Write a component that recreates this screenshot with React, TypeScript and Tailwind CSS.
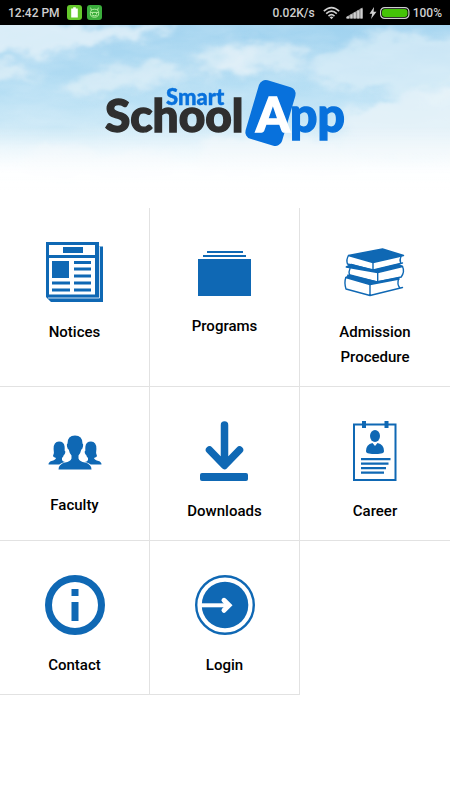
import type { ReactNode } from "react";

const BLUE = "#0f68b4";

function StatusBar() {
  return (
    <header className="flex h-[25px] items-center justify-between bg-black px-2 text-[12px] font-medium text-[#cfcfcf]">
      <div className="flex items-center gap-[5px]">
        <span className="pr-0.5">12:42 PM</span>
        <svg width="15" height="15" viewBox="0 0 15 15" aria-hidden="true">
          <rect width="15" height="15" rx="3" fill="#65c92c" />
          <path d="M4.2 3.6h2V2.3h2.6v1.3h2v9H4.2z" fill="#fff" />
        </svg>
        <svg width="15" height="15" viewBox="0 0 15 15" aria-hidden="true">
          <rect width="15" height="15" rx="3" fill="#3aad3c" />
          <g fill="none" stroke="#b4eda4" strokeWidth="1">
            <ellipse cx="7.5" cy="8.2" rx="4.2" ry="4" />
            <path d="M4.4 5 3.6 2.6M10.6 5l.8-2.4M3.5 7.4h8M5 10q2.5 1.6 5 0M5.5 8v1M9.5 8v1" />
          </g>
        </svg>
      </div>
      <div className="flex items-center">
        <span className="pr-2">0.02K/s</span>
        <svg width="17" height="14" viewBox="0 0 17 14" fill="none" stroke="#cfcfcf" strokeWidth="1.6" aria-hidden="true">
          <path d="M.8 5.2Q8.5-2 16.2 5.2M3.2 7.7q5.3-5 10.6 0M5.5 10.1q3-2.9 6 0" />
          <path d="M6.6 11.2 8.5 13.3l1.9-2.1q-1.9-1.4-3.8 0z" fill="#cfcfcf" stroke="none" />
        </svg>
        <svg className="ml-1.5" width="17" height="12" viewBox="0 0 17 12" aria-hidden="true">
          <path d="M0 11.5V10l16.5-9.5v11z" fill="#8f8f8f" />
          <path d="M1 11.5V9.4h2v2.1zM4.4 11.5v-4h2v4zM7.8 11.5v-6h2v6zM11.2 11.5v-8h2v8zM14.6 11.5v-10h2v10z" fill="#cfcfcf" />
        </svg>
        <svg className="ml-1.5" width="8" height="12" viewBox="0 0 8 12" aria-hidden="true">
          <path d="M5 0 .5 6.8h2.7L2 12l5.5-7.2H4.6z" fill="#cfcfcf" />
        </svg>
        <svg className="ml-[3px]" width="30" height="12" viewBox="0 0 30 12" aria-hidden="true">
          <rect x=".6" y=".6" width="28.3" height="10.8" rx="4" fill="none" stroke="#cfcfcf" strokeWidth="1.2" />
          <rect x="2" y="2" width="25.5" height="8" rx="3" fill="#45c408" />
        </svg>
        <span className="pl-[3px]">100%</span>
      </div>
    </header>
  );
}

function Sky() {
  return (
    <svg className="absolute inset-0 h-full w-full" viewBox="0 0 450 183" preserveAspectRatio="none" aria-hidden="true">
      <defs>
        <linearGradient id="sky" x1="0" y1="0" x2="0" y2="1">
          <stop offset="0" stopColor="#a0d2ef" />
          <stop offset="0.4" stopColor="#b7dff4" />
          <stop offset="0.6" stopColor="#cfeaf7" />
          <stop offset="0.8" stopColor="#f0f9fd" />
          <stop offset="1" stopColor="#fff" />
        </linearGradient>
        <linearGradient id="fade" x1="0" y1="0" x2="0" y2="1">
          <stop offset="0.55" stopColor="#fff" stopOpacity="0" />
          <stop offset="0.8" stopColor="#fff" stopOpacity="0.85" />
          <stop offset="0.93" stopColor="#fff" />
        </linearGradient>
        <filter id="wisps" x="0" y="0" width="1" height="1">
          <feTurbulence type="fractalNoise" baseFrequency="0.016 0.05" numOctaves="5" seed="7" />
          <feColorMatrix values="0 0 0 0 1  0 0 0 0 1  0 0 0 0 1  1.4 0 0 0 -0.4" />
        </filter>
        <filter id="puff" x="-0.2" y="-0.2" width="1.4" height="1.4">
          <feTurbulence type="fractalNoise" baseFrequency="0.04 0.07" numOctaves="5" seed="4" result="n" />
          <feGaussianBlur in="SourceGraphic" stdDeviation="6 3" result="soft" />
          <feDisplacementMap in="soft" in2="n" scale="26" xChannelSelector="R" yChannelSelector="G" />
          <feGaussianBlur stdDeviation="0.8" />
        </filter>
      </defs>
      <rect width="450" height="183" fill="url(#sky)" />
      <rect width="450" height="183" filter="url(#wisps)" opacity="0.25" />
      <g fill="#eaf4f9" filter="url(#puff)">
        <path d="M-20-8Q60-8 110 4q50-6 75-6-40 14-70 18-60 16-135 12z" opacity="0.75" />
        <path d="M-20 38q40 0 60 14-30 4-60 0z" opacity="0.6" />
        <path d="M70 60q25-20 80-22 36 4 46 12-30 10-66 12-25 8-60 8z" opacity="0.6" />
        <path d="M190 38q25-24 68-20 50 2 50 24-50 2-65 6-36 4-53-10z" opacity="0.6" />
        <path d="M206 42q20-16 50-18-4 20-30 22z" opacity="0.6" />
        <path d="M310 42q25-26 66-30 50-4 94 6v54q-50 4-110-8-50 0-50-22z" opacity="0.55" />
        <path d="M340 88q40-14 80-20 15-8 50-8v76H365q-30-20-25-48z" opacity="0.8" />
        <path d="M200 122q20-14 50-8 20-12 50-2 30-4 54 14v20H200z" opacity="0.8" />
        <path d="M28 132q10-12 24-6 24-10 48 6 40-8 70-2v22H28z" opacity="0.7" />
      </g>
      <rect width="450" height="183" fill="url(#fade)" />
    </svg>
  );
}

function Logo() {
  return (
    <svg
      className="relative"
      width="242"
      height="70"
      viewBox="105 78 242 70"
      role="img"
      aria-label="Smart School App"
      fontFamily="Lato, 'Open Sans', sans-serif"
      fontWeight="900"
    >
      <rect x="252.5" y="82.5" width="38" height="61" rx="7" fill="#0871dc" transform="rotate(16.5 271.5 113)" />
      <text x="106" y="132" fontSize="46" fill="#2f2f2f" stroke="#2f2f2f" strokeWidth="1.4">School</text>
      <text x="167" y="105" fontSize="22" fill="#0871dc" stroke="#0871dc" strokeWidth=".4">Smart</text>
      <text x="257" y="132" fontSize="48" fill="#fff" stroke="#fff" strokeWidth="1.4">A</text>
      <text x="291" y="132" fontSize="48" fill="#0871dc" stroke="#0871dc" strokeWidth="1.4">pp</text>
    </svg>
  );
}

function NoticesIcon() {
  return (
    <svg width="60" height="60" viewBox="0 0 60 60" fill={BLUE} aria-hidden="true">
      <path fillRule="evenodd" d="M1 0h53v4.5h4V60H6L1 55zM4 3v10h46V3zM4 16v36.5h46V16z" />
      <path d="M18 5h20v6H18zM7 19h17v17H7zM7 39.5h18v3H7zM7 46.5h18v3H7zM29 19h17v3H29zM29 25.5h17v3H29zM29 32.5h17v3H29zM29 39.5h17v3H29zM29 46.5h17v3H29z" />
      <path d="M3 56h51.5V4.5" fill="none" stroke="#fff" strokeWidth=".8" />
    </svg>
  );
}

function ProgramsIcon() {
  return (
    <svg width="60" height="54" viewBox="0 0 60 54" fill={BLUE} aria-hidden="true">
      <path d="M12 9h36v2H12zM8 13h43v2H8zM3 17h53v37H3z" />
    </svg>
  );
}

function BooksIcon() {
  return (
    <svg className="overflow-visible" width="60" height="60" viewBox="0 0 60 60" fill="none" stroke={BLUE} strokeWidth="1.4" strokeLinejoin="round" strokeLinecap="round" aria-hidden="true">
      {/* top book */}
      <path d="M3.5 13.5 37.5 7l21 6.500-30.500 7z" fill={BLUE} />
      <path d="M3.5 13.500q-2.500 4-1 8.500L28.300 28l29.200-7M28 20.500V28M56 14.500q-1.500 3-.5 6" />
      {/* middle book */}
      <path d="m1.300 25 5-2.500 22 6 25-6 4.200 2-24.800 6z" fill={BLUE} />
      <path d="M57.500 24.500q2.500 5-1.300 10.500L32 40 2.700 33.200M32.700 30.500V40M5 26.500q-1.500 3-.5 6.500" />
      {/* bottom book */}
      <path d="m.8 35.500 4.200-2.500 27 7 21.500-4 .5 1-29 5.500z" fill={BLUE} />
      <path d="M.8 35.500q-1.800 5 .2 11.500l24 6.500 32.500-8M25 42.500v11M53.500 37q-1.500 5 1 8.500" />
    </svg>
  );
}

function FacultyIcon() {
  return (
    <svg width="60" height="54" viewBox="0 0 60 54" fill={BLUE} aria-hidden="true">
      <path d="M30 14.5q7.500 0 7.500 8 1 .5.5 3-.5 2.500-1.700 3-.8 4-2.800 6v3q1 3 6.500 4 6.500 1.800 6.500 7H13.500q0-5.200 6.500-7 5.500-1 6.500-4v-3q-2-2-2.800-6-1.200-.5-1.700-3-.5-2.500.5-3Q22.500 14.500 30 14.500z" />
      <path d="M14 20.500q5 0 5.600 5 .2 2.500 0 4 1.400 1 .4 3-.5 1.200-1.200 1.500-.5 2-1.800 3v2q.4 1.500 3 2-3.500.8-5.800 2.500H3.500q0-2.500 3-3.500 4-1 4.500-3-3-.8-3-2 1.500-3 .6-7Q8.500 20.500 14 20.500z" />
      <path d="M46 20.500q-5 0-5.600 5-.2 2.500 0 4-1.400 1-.4 3 .5 1.200 1.200 1.500.5 2 1.800 3v2q-.4 1.500-3 2 3.500.8 5.800 2.500h10.700q0-2.500-3-3.500-4-1-4.500-3 3-.8 3-2-1.500-3-.6-7Q51.500 20.500 46 20.500z" />
    </svg>
  );
}

function DownloadIcon() {
  return (
    <svg width="60" height="60" viewBox="0 0 60 60" aria-hidden="true">
      <path d="M29.500 4v40M14.500 29l15 15.500 15-15.500" fill="none" stroke={BLUE} strokeWidth="7.500" strokeLinecap="round" strokeLinejoin="round" />
      <rect x="5" y="52" width="48" height="8" rx="2" fill={BLUE} />
    </svg>
  );
}

function CareerIcon() {
  return (
    <svg width="60" height="60" viewBox="0 0 60 60" fill={BLUE} aria-hidden="true">
      <path fillRule="evenodd" d="M8 2.500H17V0h4v2.500h18.500V0h4v2.500H51.500V60H8zM10 4.500V58H49.500V4.500h-6V7h-4V4.500H21V7h-4V4.500z" />
      <ellipse cx="30" cy="15" rx="5" ry="6" />
      <path d="M21 30q0-6.500 6.500-8l2.500 3 2.500-3q6.500 1.500 6.500 8 0 2-3 2.500-6 1-12 0-3-.5-3-2.500z" />
      <path d="M16 37h29.500v2.200H16zM16 41.500h27.500v2.200H16zM16 46h25v2.200H16zM16 50.500h23v2.200H16z" />
    </svg>
  );
}

function ContactIcon() {
  return (
    <svg width="60" height="60" viewBox="0 0 60 60" aria-hidden="true">
      <circle cx="30" cy="30" r="26.5" fill="none" stroke={BLUE} strokeWidth="7" />
      <path d="M26.500 14h7v7h-7zM26.500 27h7v19h-7z" fill={BLUE} />
    </svg>
  );
}

function LoginIcon() {
  return (
    <svg width="60" height="60" viewBox="0 0 60 60" aria-hidden="true">
      <circle cx="30" cy="30" r="28.8" fill="none" stroke={BLUE} strokeWidth="2.4" />
      <circle cx="30" cy="30" r="23.3" fill={BLUE} />
      <path d="M5 30.300h28" fill="none" stroke="#fff" strokeWidth="4" />
      <path d="m29 25.300 5 5-5 5" fill="none" stroke="#fff" strokeWidth="5" strokeLinecap="round" />
    </svg>
  );
}

const tiles: { label: string; icon: ReactNode }[] = [
  { label: "Notices", icon: <NoticesIcon /> },
  { label: "Programs", icon: <ProgramsIcon /> },
  { label: "Admission Procedure", icon: <BooksIcon /> },
  { label: "Faculty", icon: <FacultyIcon /> },
  { label: "Downloads", icon: <DownloadIcon /> },
  { label: "Career", icon: <CareerIcon /> },
  { label: "Contact", icon: <ContactIcon /> },
  { label: "Login", icon: <LoginIcon /> },
];

function Tile({ label, icon }: { label: string; icon: ReactNode }) {
  return (
    <button className="flex flex-col items-center gap-[18px] border-r border-b border-[#e2e2e2] px-6 pt-[34px] pb-4 text-[15px] leading-[25px] font-medium text-black nth-[3n]:border-r-0">
      {icon}
      <span>{label}</span>
    </button>
  );
}

export default function App() {
  return (
    <div className="min-h-screen bg-white font-['Roboto',sans-serif]">
      <StatusBar />
      <div className="relative flex h-[183px] justify-center pt-[53px]">
        <Sky />
        <Logo />
      </div>
      <main className="grid grid-cols-3">
        {tiles.map((tile) => (
          <Tile key={tile.label} label={tile.label} icon={tile.icon} />
        ))}
      </main>
    </div>
  );
}
